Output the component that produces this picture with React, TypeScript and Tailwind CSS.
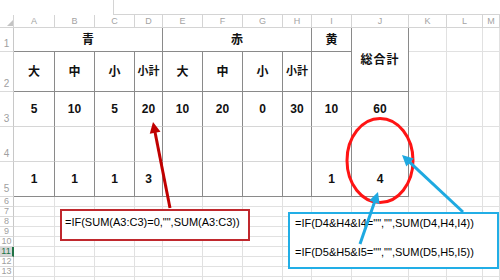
import React from "react";

type C = { t: string; span?: number; rows?: number; sm?: boolean };

const DATA: C[][] = [
  [{ t: "青", span: 4 }, { t: "赤", span: 4 }, { t: "黄" }, { t: "総合計", rows: 2 }],
  [{ t: "大" }, { t: "中" }, { t: "小" }, { t: "小計", sm: true }, { t: "大" }, { t: "中" }, { t: "小" }, { t: "小計", sm: true }, { t: "" }],
  [{ t: "5" }, { t: "10" }, { t: "5" }, { t: "20" }, { t: "10" }, { t: "20" }, { t: "0" }, { t: "30" }, { t: "10" }, { t: "60" }],
  [{ t: "" }, { t: "" }, { t: "" }, { t: "" }, { t: "" }, { t: "" }, { t: "" }, { t: "" }, { t: "" }, { t: "" }],
  [{ t: "1" }, { t: "1" }, { t: "1" }, { t: "3" }, { t: "" }, { t: "" }, { t: "" }, { t: "" }, { t: "1" }, { t: "4" }],
];

const LETTERS = ["A", "B", "C", "D", "E", "F", "G", "H", "I", "J", "K", "L", "M"];

function spanClass(n?: number) {
  if (n === 4) return "col-span-4";
  return "";
}

function arrow(x1: number, y1: number, x2: number, y2: number, len = 11, hw = 5.5) {
  const dx = x2 - x1;
  const dy = y2 - y1;
  const d = Math.hypot(dx, dy);
  const ux = dx / d;
  const uy = dy / d;
  const bx = x2 - ux * len;
  const by = y2 - uy * len;
  const px = -uy;
  const py = ux;
  return {
    x1,
    y1,
    x2: bx + ux * 1,
    y2: by + uy * 1,
    head: `${x2},${y2} ${bx + px * hw},${by + py * hw} ${bx - px * hw},${by - py * hw}`,
  };
}

function RowHeader({ n, tall, hide }: { n: number; tall: boolean; hide?: boolean }) {
  const sel = n === 11;
  return (
    <div
      className={
        tall
          ? "flex items-end justify-center pb-[2px] border-r border-b border-r-[#c8c8c8] border-b-[#dadada] text-[10px] leading-none text-[#a0a0a0]"
          : sel
          ? "flex items-center justify-center border-r-2 border-b border-r-[#217346] border-b-[#c6c6c6] bg-[#d8d8d8] text-[9px] leading-none text-[#217346]"
          : "flex items-center justify-center border-r border-b border-r-[#c8c8c8] border-b-[#dadada] text-[9px] leading-none text-[#a0a0a0]"
      }
    >
      {hide ? "" : n}
    </div>
  );
}

export default function App() {
  const red = arrow(170, 208, 153, 122);
  const blue1 = arrow(463, 212, 402, 155);
  const blue2 = arrow(360, 244, 378, 192);

  const cells: React.ReactNode[] = [];

  cells.push(
    <div key="corner" className="relative border-r border-b border-[#d4d4d4]">
      <svg className="absolute left-[7px] top-[5px]" width="6" height="6" viewBox="0 0 6 6">
        <polygon points="6,0 6,6 0,6" fill="#c4c4c4" />
      </svg>
    </div>
  );
  LETTERS.forEach((l) =>
    cells.push(
      <div
        key={"h" + l}
        className="flex items-center justify-center border-r border-b border-[#d4d4d4] text-[9px] leading-none text-[#a3a3a3]"
      >
        {l}
      </div>
    )
  );

  DATA.forEach((row, ri) => {
    cells.push(<RowHeader key={"rh" + ri} n={ri + 1} tall />);
    row.forEach((c, ci) => {
      const lightBottom = ri === 2 || ri === 3;
      cells.push(
        <div
          key={`c${ri}-${ci}`}
          className={[
            "flex items-center justify-center border-r border-b text-[#111] font-semibold",
            lightBottom ? "border-r-[#8a8a8a] border-b-[#d6d6d6]" : "border-r-[#8a8a8a] border-b-[#8a8a8a]",
            c.sm ? "text-[11px]" : "text-[12px]",
            spanClass(c.span),
            c.rows === 2 ? "row-span-2" : "",
            c.t === "総合計" ? "tracking-[1px]" : "",
          ].join(" ")}
        >
          {c.t}
        </div>
      );
    });
    for (let k = 0; k < 3; k++) {
      cells.push(<div key={`g${ri}-${k}`} className="border-r border-b border-[#e1e1e1]" />);
    }
  });

  for (let r = 6; r <= 14; r++) {
    cells.push(<RowHeader key={"rh" + r} n={r} tall={false} hide={r === 14} />);
    for (let k = 0; k < 13; k++) {
      cells.push(<div key={`e${r}-${k}`} className="border-r border-b border-[#e1e1e1]" />);
    }
  }

  return (
    <div className="relative w-[500px] h-[280px] overflow-hidden bg-white font-['Liberation_Sans','Noto_Sans_CJK_JP',sans-serif]">
      <div className="flex h-[15px]">
        <div className="w-[113px]" />
        <div className="flex-1 border-l border-b border-[#d4d4d4]" />
      </div>
      <div className="grid grid-cols-[14px_41px_40px_40px_28px_40px_40px_40px_29px_40px_57px_38px_36px_1fr] grid-rows-[13px_24px_40px_35px_35px_35px_repeat(9,10px)]">
        {cells}
      </div>

      <div className="absolute left-[60px] top-[209px] w-[190px] h-[32px] border-2 border-[#c0282d] bg-white pl-[3px] pt-[5px] text-[11px] leading-[13px] text-black whitespace-nowrap">
        =IF(SUM(A3:C3)=0,"",SUM(A3:C3))
      </div>

      <div className="absolute left-[288px] top-[212px] w-[211px] h-[57px] border-2 border-[#22aee6] bg-white pl-[5px] pt-[3px] flex flex-col gap-[16px] text-[11px] leading-[13px] text-black whitespace-nowrap">
        <span>=IF(D4&amp;H4&amp;I4="","",SUM(D4,H4,I4))</span>
        <span>=IF(D5&amp;H5&amp;I5="","",SUM(D5,H5,I5))</span>
      </div>

      <svg className="absolute left-0 top-0 pointer-events-none" width="500" height="280" viewBox="0 0 500 280">
        <ellipse cx="380" cy="160.5" rx="33" ry="42" fill="none" stroke="#ff1414" strokeWidth="3" />
        <line x1={red.x1} y1={red.y1} x2={red.x2} y2={red.y2} stroke="#c00000" strokeWidth="3" />
        <polygon points={red.head} fill="#c00000" />
        <line x1={blue1.x1} y1={blue1.y1} x2={blue1.x2} y2={blue1.y2} stroke="#1ea9e1" strokeWidth="3" />
        <polygon points={blue1.head} fill="#1ea9e1" />
        <line x1={blue2.x1} y1={blue2.y1} x2={blue2.x2} y2={blue2.y2} stroke="#1ea9e1" strokeWidth="3" />
        <polygon points={blue2.head} fill="#1ea9e1" />
      </svg>
    </div>
  );
}
